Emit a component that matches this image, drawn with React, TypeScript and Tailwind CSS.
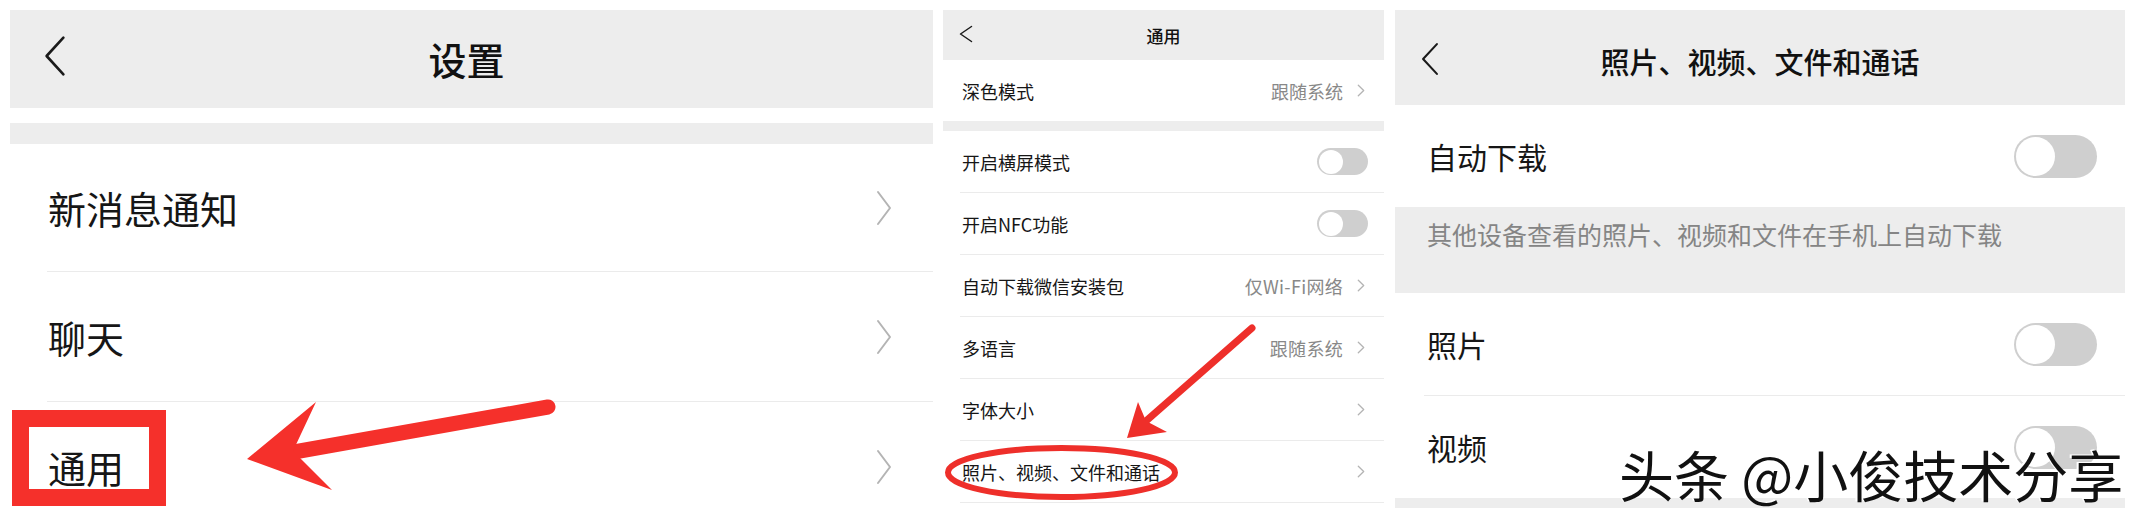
const font = "font-['Noto_Sans_CJK_SC','Noto_Sans',sans-serif]";

function Back({ w, h, sw }: { w: number; h: number; sw: number }) {
  return (
    <svg width={w} height={h} viewBox={`0 0 ${w} ${h}`}>
      <polyline
        points={`${w - sw},${sw} ${sw},${h / 2} ${w - sw},${h - sw}`}
        fill="none"
        stroke="#1a1a1a"
        strokeWidth={sw}
        strokeLinecap="round"
        strokeLinejoin="round"
      />
    </svg>
  );
}

function Chevron({ w, h, sw }: { w: number; h: number; sw: number }) {
  return (
    <svg width={w} height={h} viewBox={`0 0 ${w} ${h}`} className="shrink-0">
      <polyline
        points={`${sw},${sw} ${w - sw},${h / 2} ${sw},${h - sw}`}
        fill="none"
        stroke="#b4b4b4"
        strokeWidth={sw}
        strokeLinecap="round"
        strokeLinejoin="round"
      />
    </svg>
  );
}

function Toggle({ big }: { big?: boolean }) {
  return (
    <div
      className={
        big
          ? "w-[83px] h-[43px] rounded-full bg-[#cfcfcf] p-[2px] shrink-0"
          : "w-[51px] h-[27px] rounded-full bg-[#cfcfcf] p-[1.5px] shrink-0"
      }
    >
      <div className="h-full aspect-square rounded-full bg-white" />
    </div>
  );
}

// left column: 设置
function SettingsPanel() {
  const rows = [
    { label: "新消息通知", h: "h-[128px]" },
    { label: "聊天", h: "h-[130px]" },
    { label: "通用", h: "h-[130px]" },
  ];
  return (
    <div className="w-[923px] h-[500px] flex flex-col overflow-hidden shrink-0">
      <div className="h-[98px] bg-[#ededed] relative flex items-center justify-center shrink-0">
        <div className="absolute left-[34px] top-[25px]">
          <Back w={22} h={42} sw={2.6} />
        </div>
        <span className="text-[38px] leading-none font-medium text-[#111] ml-[-10px]">设置</span>
      </div>
      <div className="h-[15px] shrink-0" />
      <div className="h-[21px] bg-[#ededed] shrink-0" />
      {rows.map((r) => (
        <div
          key={r.label}
          className={`${r.h} shrink-0 ml-[37px] border-b border-[#ebebeb] flex items-center justify-between pl-[1px] pr-[41px]`}
        >
          <span className="text-[38px] leading-none text-[#161616]">{r.label}</span>
          <Chevron w={16} h={36} sw={2} />
        </div>
      ))}
    </div>
  );
}

// middle column: 通用
function GeneralPanel() {
  const rows: { label: string; value?: string; toggle?: boolean }[] = [
    { label: "开启横屏模式", toggle: true },
    { label: "开启NFC功能", toggle: true },
    { label: "自动下载微信安装包", value: "仅Wi-Fi网络" },
    { label: "多语言", value: "跟随系统" },
    { label: "字体大小", value: "" },
    { label: "照片、视频、文件和通话", value: "" },
    { label: "", value: "" },
  ];
  return (
    <div className="w-[441px] h-[500px] flex flex-col overflow-hidden shrink-0">
      <div className="h-[50px] bg-[#ededed] relative flex items-center justify-center shrink-0">
        <div className="absolute left-[16px] top-[15px]">
          <Back w={14} h={18} sw={1.5} />
        </div>
        <span className="text-[17px] leading-none font-medium text-[#111]">通用</span>
      </div>
      <div className="h-[61px] shrink-0 flex items-center justify-between pl-[19px] pr-[19px]">
        <span className="text-[18px] leading-none text-[#161616]">深色模式</span>
        <div className="flex items-center gap-[14px]">
          <span className="text-[18px] leading-none text-[#888]">跟随系统</span>
          <Chevron w={8} h={13} sw={1.3} />
        </div>
      </div>
      <div className="h-[10px] bg-[#ededed] shrink-0" />
      {rows.map((r, i) => (
        <div
          key={i}
          className="h-[62px] shrink-0 ml-[17px] border-b border-[#ebebeb] flex items-center justify-between pl-[2px] pr-[16px]"
        >
          <span className="text-[18px] leading-none text-[#161616]">{r.label}</span>
          {r.toggle ? (
            <Toggle />
          ) : (
            <div className="flex items-center gap-[14px] mr-[3px]">
              {r.value && <span className="text-[18px] leading-none text-[#888] tracking-[0.3px]">{r.value}</span>}
              <Chevron w={8} h={13} sw={1.3} />
            </div>
          )}
        </div>
      ))}
    </div>
  );
}

// right column: 照片、视频、文件和通话
function MediaPanel() {
  return (
    <div className="w-[730px] h-[498px] flex flex-col overflow-hidden shrink-0 ml-[1px]">
      <div className="h-[95px] bg-[#ededed] relative flex items-center justify-center shrink-0">
        <div className="absolute left-[26px] top-[32px]">
          <Back w={18} h={34} sw={2.1} />
        </div>
        <span className="text-[29px] leading-none font-medium text-[#111] mt-[8px]">照片、视频、文件和通话</span>
      </div>
      <div className="h-[102px] shrink-0 flex items-center justify-between pl-[32px] pr-[28px]">
        <span className="text-[30px] leading-none text-[#161616]">自动下载</span>
        <Toggle big />
      </div>
      <div className="h-[86px] shrink-0 bg-[#ededed] pl-[32px] pt-[15px]">
        <span className="text-[25px] leading-none text-[#858585]">其他设备查看的照片、视频和文件在手机上自动下载</span>
      </div>
      <div className="h-[103px] shrink-0 ml-[29px] border-b border-[#ebebeb] flex items-center justify-between pl-[3px] pr-[28px]">
        <span className="text-[30px] leading-none text-[#161616]">照片</span>
        <Toggle big />
      </div>
      <div className="h-[102px] shrink-0 flex items-center justify-between pl-[32px] pr-[28px]">
        <span className="text-[30px] leading-none text-[#161616]">视频</span>
        <Toggle big />
      </div>
      <div className="h-[10px] bg-[#ededed] shrink-0" />
    </div>
  );
}

export default function App() {
  return (
    <div className={`relative w-[2136px] h-[520px] bg-white flex gap-[10px] pl-[10px] pt-[10px] overflow-hidden ${font}`}>
      <SettingsPanel />
      <GeneralPanel />
      <MediaPanel />

      {/* annotations */}
      <svg className="absolute left-0 top-0 pointer-events-none" width="2136" height="520" viewBox="0 0 2136 520">
        <rect x="20.5" y="418.5" width="137" height="79" fill="none" stroke="#f5302b" strokeWidth="17" />
        <line x1="548" y1="407" x2="294" y2="452" stroke="#f5302b" strokeWidth="15" strokeLinecap="round" />
        <polygon points="247,459 316,402 293,451 332,490" fill="#f5302b" />
        <line x1="1252" y1="328" x2="1146" y2="421" stroke="#ee2f2a" strokeWidth="7" strokeLinecap="round" />
        <polygon points="1127,438 1138,402 1146,421 1167,432" fill="#ee2f2a" />
        <ellipse cx="1061.5" cy="472.5" rx="113.5" ry="24.5" fill="none" stroke="#ee2f2a" strokeWidth="6" />
      </svg>

      <span className="absolute left-[1619px] top-[446px] text-[55px] leading-none text-[#111] whitespace-nowrap [text-shadow:-2px_-1px_0_#fff]">
        头条 @小俊技术分享
      </span>
    </div>
  );
}
